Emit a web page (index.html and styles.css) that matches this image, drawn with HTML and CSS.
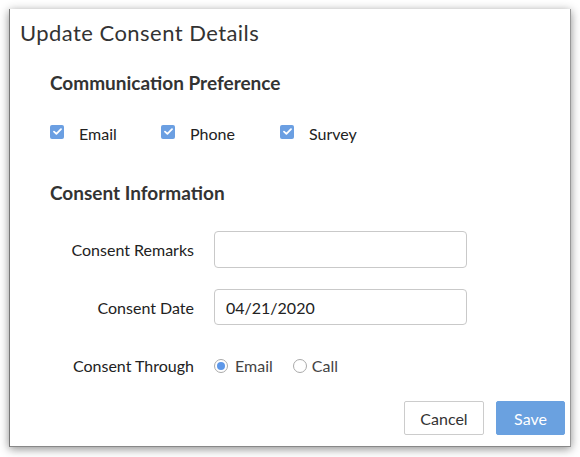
FILE: index.html
```html
<!DOCTYPE html>
<html>
<head>
<meta charset="utf-8">
<link rel="stylesheet" href="styles.css">
</head>
<body>
<div class="dialog">
  <h1 class="title">Update Consent Details</h1>
  <section class="section">
    <h2 class="section-title">Communication Preference</h2>
    <div class="checks">
      <label class="check c1"><span class="box"><svg width="9" height="7" viewBox="0 0 9 7"><path d="M1 3.6 L3.4 5.8 L8 1.2" fill="none" stroke="#fff" stroke-width="1.8" stroke-linecap="round" stroke-linejoin="round"/></svg></span>Email</label>
      <label class="check c2"><span class="box"><svg width="9" height="7" viewBox="0 0 9 7"><path d="M1 3.6 L3.4 5.8 L8 1.2" fill="none" stroke="#fff" stroke-width="1.8" stroke-linecap="round" stroke-linejoin="round"/></svg></span>Phone</label>
      <label class="check"><span class="box"><svg width="9" height="7" viewBox="0 0 9 7"><path d="M1 3.6 L3.4 5.8 L8 1.2" fill="none" stroke="#fff" stroke-width="1.8" stroke-linecap="round" stroke-linejoin="round"/></svg></span>Survey</label>
    </div>
  </section>
  <section class="section info">
    <h2 class="section-title">Consent Information</h2>
    <div class="form">
      <div class="row r1">
        <span class="lbl">Consent Remarks</span>
        <div class="input"></div>
      </div>
      <div class="row r2">
        <span class="lbl">Consent Date</span>
        <div class="input">04/21/2020</div>
      </div>
      <div class="row r3">
        <span class="lbl">Consent Through</span>
        <div class="radios">
          <span class="radio on"><span class="dot"></span>Email</span>
          <span class="radio"><span class="dot"></span>Call</span>
        </div>
      </div>
    </div>
  </section>
  <div class="actions">
    <button class="btn cancel">Cancel</button>
    <button class="btn save">Save</button>
  </div>
</div>
</body>
</html>
```

FILE: styles.css
```css
* { box-sizing: border-box; }
html, body { margin: 0; padding: 0; background: #fff; }
body {
  font-family: Lato, "Liberation Sans", sans-serif;
  color: #333;
  width: 580px;
  height: 457px;
  overflow: hidden;
}
.dialog {
  margin: 9px 0 0 9px;
  width: 562px;
  height: 438px;
  background: #fff;
  border-left: 1px solid #777;
  border-right: 1px solid #999;
  border-bottom: 1px solid #888;
  box-shadow: 0 2px 9px rgba(0,0,0,0.45);
  padding: 10px 0 0 10px;
  display: flex;
  flex-direction: column;
}
.title {
  margin: 0;
  font-size: 22px;
  font-weight: 400;
  line-height: 28px;
  letter-spacing: 0.45px;
  color: #333;
}
.section { padding-left: 30px; }
.section-title {
  margin: 0;
  font-size: 19px;
  font-weight: 700;
  color: #333;
  line-height: 26px;
}
.section:first-of-type .section-title { margin-top: 23px; }
.checks {
  display: flex;
  margin-top: 27px;
  height: 20px;
  align-items: center;
}
.check {
  display: flex;
  align-items: center;
  font-size: 16px;
  color: #222;
}
.c1 { width: 111px; }
.c2 { width: 119px; }
.box {
  width: 14px;
  height: 14px;
  background: #6b9fe2;
  border-radius: 2px;
  margin-right: 15px;
  margin-top: -3px;
  display: flex;
  align-items: center;
  justify-content: center;
}
.info .section-title { margin-top: 37px; }
.form { margin-top: 25px; }
.row {
  display: flex;
  align-items: center;
}
.lbl {
  width: 144px;
  text-align: right;
  font-size: 16px;
  color: #222;
  margin-right: 20px;
}
.input {
  width: 253px;
  height: 37px;
  border: 1px solid #c9c9c9;
  border-radius: 4px;
  padding: 0 11px;
  display: flex;
  align-items: center;
  font-size: 16px;
  color: #222;
}
.r2 { margin-top: 21px; }
.r2 .input { height: 36px; }
.r3 { margin-top: 31px; }
.radios { display: flex; align-items: center; font-size: 16px; color: #444; }
.radio { display: flex; align-items: center; margin-right: 15px; }
.dot {
  width: 14px;
  height: 14px;
  border: 1px solid #aaa;
  border-radius: 50%;
  margin-right: 5px;
  position: relative;
}
.radio.on .dot { margin-right: 7px; }
.radio.on { margin-right: 20px; }
.radio.on .dot::after {
  content: "";
  position: absolute;
  left: 2px; top: 2px;
  width: 8px; height: 8px;
  border-radius: 50%;
  background: #5d97e8;
}
.actions {
  margin-top: auto;
  margin-bottom: 11px;
  display: flex;
  justify-content: flex-end;
  padding-right: 5px;
  gap: 12px;
}
.btn {
  font-family: inherit;
  font-size: 16px;
  height: 34px;
  border-radius: 2px;
  cursor: pointer;
}
.cancel {
  width: 80px;
  background: #fff;
  border: 1px solid #ccc;
  color: #333;
}
.save {
  width: 69px;
  background: #6aa1e0;
  border: 1px solid #6aa1e0;
  color: #fff;
}
```
